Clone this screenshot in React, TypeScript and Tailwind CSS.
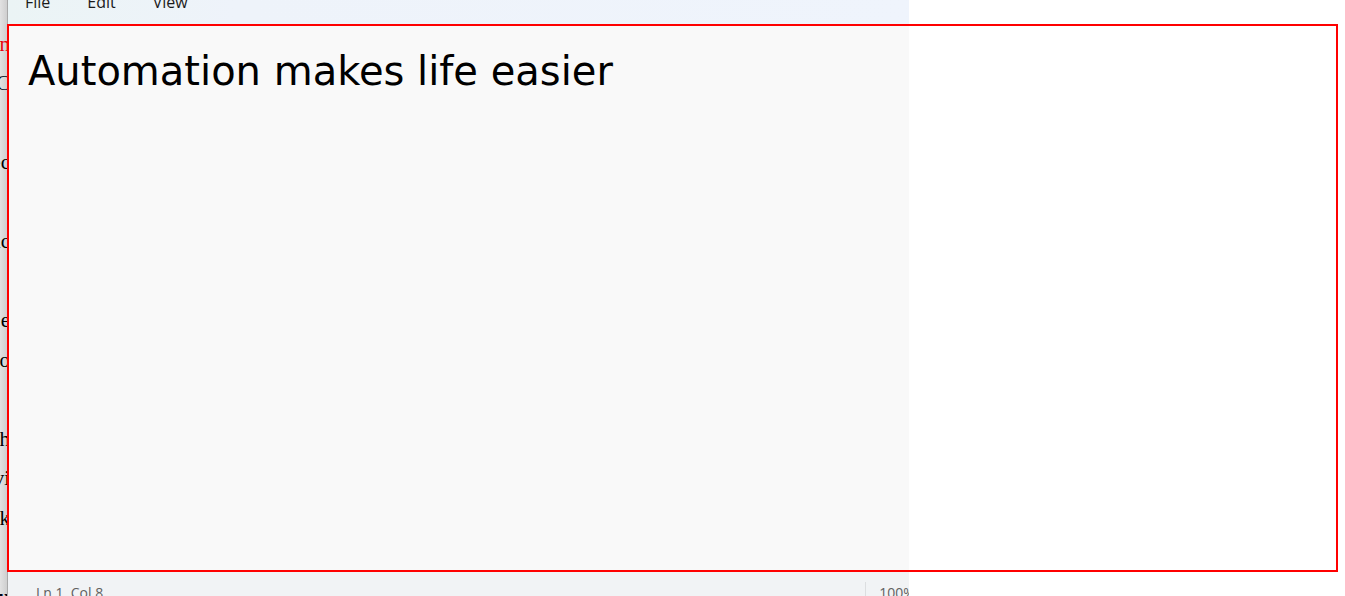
const documentLines = [
  { text: 'n', tone: 'text-red-600' },
  { text: 'C', tone: 'text-slate-950' },
  { text: '', tone: '' },
  { text: 'ec', tone: 'text-black' },
  { text: '', tone: '' },
  { text: 'ac', tone: 'text-black' },
  { text: '', tone: '' },
  { text: 'e', tone: 'text-black' },
  { text: 'o', tone: 'text-black' },
  { text: '', tone: '' },
  { text: 'h', tone: 'text-black' },
  { text: 'vi', tone: 'text-black' },
  { text: 'k', tone: 'text-black' },
  { text: '', tone: '' },
  { text: 'au', tone: 'text-slate-950 font-bold' },
];

function DocumentBehind() {
  return (
    <aside className="w-2 shrink-0 overflow-hidden border-r border-[#a9a9a9] bg-linear-to-r from-[#e2e2e2] to-[#cfcfcf] pt-[25px] font-['Liberation_Serif',serif] text-[21px]">
      <div className="-mr-[3px]">
        {documentLines.map((line, index) => (
          <p
            key={index}
            className={`flex h-[39px] items-center justify-end whitespace-nowrap even:h-10 ${line.tone}`}
          >
            {line.text}
          </p>
        ))}
      </div>
    </aside>
  );
}

function MenuBar() {
  return (
    <nav className="flex h-6 shrink-0 items-end gap-[37px] bg-linear-to-r from-[#ebf4f5] via-[#eef3fa] via-25% to-[#eff4fc] px-[17px] pb-[10px] text-base leading-6 text-[#1b1b1b]">
      <button type="button">File</button>
      <button type="button">Edit</button>
      <button type="button">View</button>
    </nav>
  );
}

function StatusBar() {
  return (
    <footer className="flex h-6 shrink-0 overflow-hidden bg-[#f1f3f5] pl-7 text-sm leading-5 text-[#606060]">
      <span className="grow pt-[11px]">Ln 1, Col 8</span>
      <span className="mt-[10px] w-11 overflow-hidden border-l border-[#dcdee0] pt-px pl-[13px]">
        100%
      </span>
    </footer>
  );
}

export default function App() {
  return (
    <main className="relative flex h-screen overflow-hidden bg-white font-['Open_Sans',sans-serif]">
      <DocumentBehind />
      <section className="flex w-[67%] flex-col overflow-hidden">
        <MenuBar />
        <textarea
          aria-label="Text editor"
          spellCheck={false}
          defaultValue="Automation makes life easier"
          className="min-h-0 grow resize-none bg-[#f9f9f9] px-5 pt-[23px] font-['DejaVu_Sans',sans-serif] text-[40px] leading-12 text-black outline-none"
        />
        <StatusBar />
      </section>
      <div className="pointer-events-none absolute top-6 right-[7px] bottom-6 left-[7px] border-2 border-[#ff0000]" />
    </main>
  );
}
